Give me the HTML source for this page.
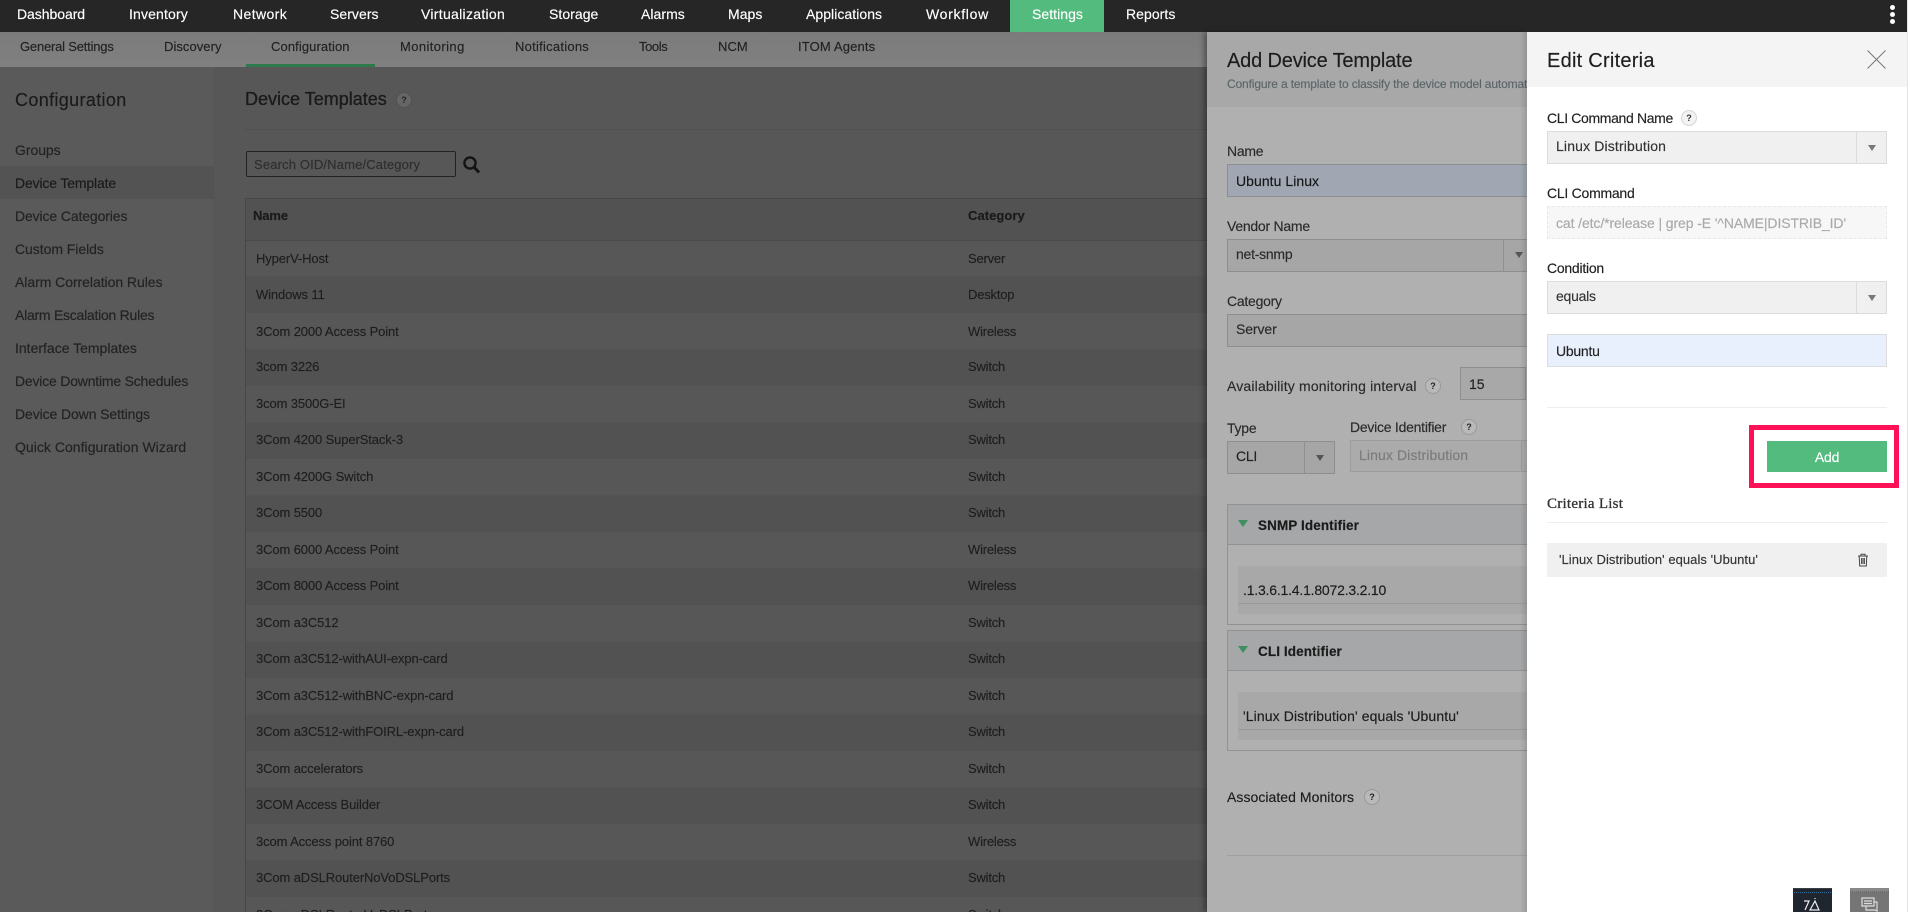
<!DOCTYPE html>
<html><head><meta charset="utf-8"><title>Add Device Template</title>
<style>
html,body{margin:0;padding:0;width:1910px;height:912px;overflow:hidden;background:#fff}
body{position:relative;font-family:"Liberation Sans",sans-serif;font-size:14px}
div,span,svg{position:absolute}
.t{white-space:nowrap;line-height:20px;height:20px;letter-spacing:-.25px;-webkit-text-stroke:.15px}
.n{color:#fff;top:4px;font-size:14px;letter-spacing:.05px}
.s{color:#222;top:37px;font-size:13px;letter-spacing:.05px}
.m{color:#222;left:15px;font-size:14px;letter-spacing:-.05px}
.r{color:#1e1e1e;left:256px;font-size:13px;letter-spacing:-.12px}
.c{color:#1e1e1e;left:968px;font-size:13px;letter-spacing:-.2px}
.l{color:#2a2a2a;left:1227px}
.p{color:#222;left:1547px}
.box{box-sizing:border-box}
.h{width:16px;height:16px;border-radius:50%;box-sizing:border-box;text-align:center;font:bold 9px/14px "Liberation Sans",sans-serif}
.ha{background:#b9b9b9;border:1px solid #999;color:#222}
.hw{background:#f3f3f3;border:1px solid #d4d4d4;color:#333}
.ar{width:0;height:0;border-left:4px solid transparent;border-right:4px solid transparent;border-top:6px solid}
</style></head><body>

<!-- Base dimmed page -->
<div style="left:0;top:67px;width:214px;height:845px;background:#5a5a5a;border-right:1px solid #555"></div>
<div style="left:215px;top:67px;width:992px;height:845px;background:#575757"></div>
<div class="box" style="left:0;top:166px;width:214px;height:33px;background:#535353"></div>

<!-- Top nav -->
<div style="left:0;top:0;width:1910px;height:32px;background:#262626"></div>
<div style="left:1010px;top:0;width:94px;height:32px;background:#53bb7e"></div>
<span class="t n" style="left:17px;letter-spacing:-.05px">Dashboard</span>
<span class="t n" style="left:129px;letter-spacing:.15px">Inventory</span>
<span class="t n" style="left:233px;letter-spacing:.4px">Network</span>
<span class="t n" style="left:330px">Servers</span>
<span class="t n" style="left:421px;letter-spacing:.3px">Virtualization</span>
<span class="t n" style="left:549px">Storage</span>
<span class="t n" style="left:641px">Alarms</span>
<span class="t n" style="left:728px">Maps</span>
<span class="t n" style="left:806px">Applications</span>
<span class="t n" style="left:926px;letter-spacing:.7px">Workflow</span>
<span class="t n" style="left:1032px">Settings</span>
<span class="t n" style="left:1126px">Reports</span>
<div style="left:1890px;top:5px;width:5px;height:5px;border-radius:50%;background:#fff"></div>
<div style="left:1890px;top:12px;width:5px;height:5px;border-radius:50%;background:#fff"></div>
<div style="left:1890px;top:19px;width:5px;height:5px;border-radius:50%;background:#fff"></div>

<!-- Sub nav -->
<div style="left:0;top:32px;width:1207px;height:35px;background:linear-gradient(#7b7b7b,#808080)"></div>
<div style="left:246px;top:64px;width:129px;height:3px;background:#2f7a4c"></div>
<span class="t s" style="left:20px;letter-spacing:-.2px">General Settings</span>
<span class="t s" style="left:164px;letter-spacing:.05px">Discovery</span>
<span class="t s" style="left:271px;letter-spacing:.1px">Configuration</span>
<span class="t s" style="left:400px;letter-spacing:.4px">Monitoring</span>
<span class="t s" style="left:515px;letter-spacing:.25px">Notifications</span>
<span class="t s" style="left:639px;letter-spacing:-.4px">Tools</span>
<span class="t s" style="left:718px">NCM</span>
<span class="t s" style="left:798px;letter-spacing:.15px">ITOM Agents</span>

<!-- Sidebar -->
<span class="t" style="left:15px;top:90px;font-size:18px;color:#1a1a1a;letter-spacing:.35px">Configuration</span>
<span class="t m" style="top:140px">Groups</span>
<span class="t m" style="top:173px;color:#1a1a1a;letter-spacing:-.15px">Device Template</span>
<span class="t m" style="top:206px;letter-spacing:-.12px">Device Categories</span>
<span class="t m" style="top:239px">Custom Fields</span>
<span class="t m" style="top:272px">Alarm Correlation Rules</span>
<span class="t m" style="top:305px;letter-spacing:-.25px">Alarm Escalation Rules</span>
<span class="t m" style="top:338px;letter-spacing:0">Interface Templates</span>
<span class="t m" style="top:371px;letter-spacing:-.2px">Device Downtime Schedules</span>
<span class="t m" style="top:404px;letter-spacing:-.1px">Device Down Settings</span>
<span class="t m" style="top:437px;letter-spacing:.03px">Quick Configuration Wizard</span>

<!-- Main -->
<span class="t" style="left:245px;top:89px;font-size:18px;color:#1a1a1a;letter-spacing:0;-webkit-text-stroke:.3px">Device Templates</span>
<div class="h" style="left:396px;top:92px;background:#666;border:1px solid #525252;color:#222">?</div>
<div style="left:245px;top:129px;width:962px;height:0;border-top:1px dotted #4c4c4c"></div>
<div class="box" style="left:246px;top:151px;width:210px;height:26px;border:1px solid #222;border-radius:2px;background:#575757"></div>
<span class="t" style="left:254px;top:155px;font-size:13px;color:#2e2e2e;letter-spacing:.15px">Search OID/Name/Category</span>
<svg style="left:462px;top:155px" width="19" height="19" viewBox="0 0 19 19"><circle cx="8" cy="8" r="5.6" fill="none" stroke="#141414" stroke-width="2.4"/><path d="M12 12l5 5.500" stroke="#141414" stroke-width="3" fill="none"/></svg>

<div style="left:245px;top:198px;width:962px;height:43px;background:#525252;border-top:1px solid #464646;border-bottom:1px solid #4a4a4a;box-sizing:border-box"></div>
<div style="left:245px;top:198px;width:1px;height:714px;background:#464646"></div>
<div style="left:246px;top:241px;width:961px;height:671px;background:repeating-linear-gradient(#575757 0,#575757 35.5px,#525252 35.5px,#525252 72px,#575757 72px,#575757 73px)"></div>
<span class="t r" style="left:253px;top:206px;font-weight:bold;color:#1a1a1a;font-size:13px">Name</span>
<span class="t c" style="top:206px;font-weight:bold;color:#1a1a1a;letter-spacing:.05px">Category</span>

<span class="t r" style="top:249px">HyperV-Host</span><span class="t c" style="top:249px">Server</span>
<span class="t r" style="top:285px">Windows 11</span><span class="t c" style="top:285px">Desktop</span>
<span class="t r" style="top:322px">3Com 2000 Access Point</span><span class="t c" style="top:322px">Wireless</span>
<span class="t r" style="top:357px">3com 3226</span><span class="t c" style="top:357px">Switch</span>
<span class="t r" style="top:394px">3com 3500G-EI</span><span class="t c" style="top:394px">Switch</span>
<span class="t r" style="top:430px">3Com 4200 SuperStack-3</span><span class="t c" style="top:430px">Switch</span>
<span class="t r" style="top:467px">3Com 4200G Switch</span><span class="t c" style="top:467px">Switch</span>
<span class="t r" style="top:503px">3Com 5500</span><span class="t c" style="top:503px">Switch</span>
<span class="t r" style="top:540px">3Com 6000 Access Point</span><span class="t c" style="top:540px">Wireless</span>
<span class="t r" style="top:576px">3Com 8000 Access Point</span><span class="t c" style="top:576px">Wireless</span>
<span class="t r" style="top:613px">3Com a3C512</span><span class="t c" style="top:613px">Switch</span>
<span class="t r" style="top:649px">3Com a3C512-withAUI-expn-card</span><span class="t c" style="top:649px">Switch</span>
<span class="t r" style="top:686px">3Com a3C512-withBNC-expn-card</span><span class="t c" style="top:686px">Switch</span>
<span class="t r" style="top:722px">3Com a3C512-withFOIRL-expn-card</span><span class="t c" style="top:722px">Switch</span>
<span class="t r" style="top:759px">3Com accelerators</span><span class="t c" style="top:759px">Switch</span>
<span class="t r" style="top:795px">3COM Access Builder</span><span class="t c" style="top:795px">Switch</span>
<span class="t r" style="top:832px">3com Access point 8760</span><span class="t c" style="top:832px">Wireless</span>
<span class="t r" style="top:868px">3Com aDSLRouterNoVoDSLPorts</span><span class="t c" style="top:868px">Switch</span>
<span class="t r" style="top:905px">3Com aDSLRouterVoDSLPorts</span><span class="t c" style="top:905px">Switch</span>

<!-- Add Device Template panel -->
<div style="left:1207px;top:32px;width:320px;height:880px;background:#b0b0b0;box-shadow:-3px 0 5px rgba(0,0,0,.35)"></div>
<div style="left:1207px;top:32px;width:320px;height:75px;background:#a8a8a8"></div>
<span class="t" style="left:1227px;top:51px;font-size:20px;color:#1c1c1c;letter-spacing:-.17px">Add Device Template</span>
<div style="left:1227px;top:74px;width:300px;height:20px;overflow:hidden"><span class="t" style="left:0;top:0;font-size:12px;color:#5b6569;letter-spacing:-.14px">Configure a template to classify the device model automatically</span></div>

<span class="t l" style="top:141px">Name</span>
<div class="box" style="left:1227px;top:164px;width:300px;height:33px;background:#a0a7b2;border:1px solid #8e8e8e;border-right:0"></div>
<span class="t" style="left:1236px;top:171px;color:#151515;letter-spacing:.05px">Ubuntu Linux</span>

<span class="t l" style="top:216px">Vendor Name</span>
<div class="box" style="left:1227px;top:239px;width:300px;height:33px;background:#a6a6a6;border:1px solid #8e8e8e;border-right:0"></div>
<div style="left:1503px;top:240px;width:1px;height:31px;background:#909090"></div>
<div class="ar" style="left:1515px;top:252px;border-top-color:#555"></div>
<span class="t" style="left:1236px;top:244px;color:#2a2a2a">net-snmp</span>

<span class="t l" style="top:291px">Category</span>
<div class="box" style="left:1227px;top:314px;width:300px;height:33px;background:#a6a6a6;border:1px solid #8e8e8e;border-right:0"></div>
<span class="t" style="left:1236px;top:319px;color:#2a2a2a;letter-spacing:-.1px">Server</span>

<span class="t l" style="top:376px;letter-spacing:.17px">Availability monitoring interval</span>
<div class="h ha" style="left:1425px;top:378px">?</div>
<div class="box" style="left:1460px;top:367px;width:66px;height:33px;background:#a8a8a8;border:1px solid #8e8e8e"></div>
<span class="t" style="left:1469px;top:374px;color:#222;letter-spacing:0">15</span>

<span class="t l" style="top:418px">Type</span>
<span class="t" style="left:1350px;top:417px;color:#2a2a2a">Device Identifier</span>
<div class="h ha" style="left:1461px;top:419px">?</div>
<div class="box" style="left:1227px;top:441px;width:108px;height:33px;background:#a6a6a6;border:1px solid #8e8e8e"></div>
<div style="left:1304px;top:442px;width:1px;height:31px;background:#909090"></div>
<div class="ar" style="left:1316px;top:455px;border-top-color:#555"></div>
<span class="t" style="left:1236px;top:446px;color:#222">CLI</span>
<div class="box" style="left:1350px;top:440px;width:177px;height:32px;background:#ababab;border:1px solid #9c9c9c;border-right:0"></div>
<div style="left:1521px;top:441px;width:1px;height:30px;background:#9c9c9c"></div>
<span class="t" style="left:1359px;top:445px;color:#7b7b7b;letter-spacing:.1px">Linux Distribution</span>

<div class="box" style="left:1227px;top:504px;width:300px;height:121px;border:1px solid #929292;border-right:0"></div>
<div class="box" style="left:1227px;top:504px;width:300px;height:41px;background:#a5a7a9;border:1px solid #929292;border-right:0"></div>
<div style="left:1238px;top:520px;width:0;height:0;border-left:5px solid transparent;border-right:5px solid transparent;border-top:7px solid #3f9060"></div>
<span class="t" style="left:1258px;top:516px;color:#1a1a1a;font-weight:bold;font-size:13.5px;letter-spacing:.1px">SNMP Identifier</span>
<div style="left:1238px;top:566px;width:289px;height:48px;background:#a8a8a8"></div>
<div style="left:1238px;top:603px;width:289px;height:1px;background:#999"></div>
<span class="t" style="left:1243px;top:580px;color:#1c1c1c;font-size:14px;letter-spacing:-.2px">.1.3.6.1.4.1.8072.3.2.10</span>

<div class="box" style="left:1227px;top:630px;width:300px;height:121px;border:1px solid #929292;border-right:0"></div>
<div class="box" style="left:1227px;top:630px;width:300px;height:41px;background:#a5a7a9;border:1px solid #929292;border-right:0"></div>
<div style="left:1238px;top:646px;width:0;height:0;border-left:5px solid transparent;border-right:5px solid transparent;border-top:7px solid #3f9060"></div>
<span class="t" style="left:1258px;top:642px;color:#1a1a1a;font-weight:bold;font-size:13.5px;letter-spacing:.1px">CLI Identifier</span>
<div style="left:1238px;top:692px;width:289px;height:48px;background:#a8a8a8"></div>
<div style="left:1238px;top:729px;width:289px;height:1px;background:#999"></div>
<span class="t" style="left:1243px;top:706px;color:#1c1c1c;letter-spacing:.1px">'Linux Distribution' equals 'Ubuntu'</span>

<span class="t l" style="top:787px;color:#1c1c1c;letter-spacing:.05px">Associated Monitors</span>
<div class="h ha" style="left:1364px;top:789px">?</div>
<div style="left:1227px;top:855px;width:300px;height:1px;background:#a0a0a0"></div>
<div style="left:1520px;top:32px;width:7px;height:880px;background:linear-gradient(90deg,rgba(0,0,0,0),rgba(0,0,0,.12))"></div>

<!-- Edit Criteria panel -->
<div style="left:1527px;top:32px;width:380px;height:880px;background:#fff"></div>
<div style="left:1527px;top:32px;width:380px;height:55px;background:#f4f4f4"></div>
<span class="t" style="left:1547px;top:51px;font-size:20px;color:#1e1e1e;letter-spacing:.25px">Edit Criteria</span>
<svg style="left:1866px;top:49px" width="21" height="21" viewBox="0 0 21 21"><path d="M1.500 1.500L19.500 19.500M19.500 1.500L1.500 19.500" stroke="#777" stroke-width="1" fill="none"/></svg>

<span class="t p" style="top:108px;letter-spacing:-.35px">CLI Command Name</span>
<div class="h hw" style="left:1681px;top:110px">?</div>
<div class="box" style="left:1547px;top:131px;width:340px;height:33px;background:#f0f0f0;border:1px solid #dcdcdc"></div>
<div style="left:1856px;top:132px;width:1px;height:31px;background:#dcdcdc"></div>
<div class="ar" style="left:1868px;top:145px;border-top-color:#777"></div>
<span class="t" style="left:1556px;top:136px;color:#333;letter-spacing:.15px">Linux Distribution</span>

<span class="t p" style="top:183px">CLI Command</span>
<div class="box" style="left:1547px;top:206px;width:340px;height:33px;background:#f7f7f7;border:1px dashed #e9e9e9"></div>
<span class="t" style="left:1556px;top:213px;color:#a9a9a9;font-size:14px;letter-spacing:-.1px">cat /etc/*release | grep -E '^NAME|DISTRIB_ID'</span>

<span class="t p" style="top:258px">Condition</span>
<div class="box" style="left:1547px;top:281px;width:340px;height:33px;background:#f0f0f0;border:1px solid #dcdcdc"></div>
<div style="left:1856px;top:282px;width:1px;height:31px;background:#dcdcdc"></div>
<div class="ar" style="left:1868px;top:295px;border-top-color:#777"></div>
<span class="t" style="left:1556px;top:286px;color:#333">equals</span>

<div class="box" style="left:1547px;top:334px;width:340px;height:33px;background:#e8f0fe;border:1px solid #dcdcdc"></div>
<span class="t" style="left:1556px;top:341px;color:#222">Ubuntu</span>

<div style="left:1547px;top:407px;width:340px;height:1px;background:#eee"></div>
<div class="box" style="left:1749px;top:425px;width:150px;height:63px;border:5px solid #ff1158"></div>
<div style="left:1767px;top:441px;width:120px;height:31px;background:#53bb7e"></div>
<span class="t" style="left:1767px;top:447px;width:120px;text-align:center;color:#fff;letter-spacing:-.2px">Add</span>

<span class="t" style="left:1547px;top:494px;font-family:'Liberation Serif',serif;font-size:15px;color:#333;letter-spacing:.25px;-webkit-text-stroke:.3px">Criteria List</span>
<div style="left:1547px;top:522px;width:340px;height:1px;background:#eee"></div>
<div style="left:1547px;top:543px;width:340px;height:34px;background:#f0f0f0"></div>
<span class="t" style="left:1559px;top:550px;color:#333;font-size:13px;letter-spacing:.05px">'Linux Distribution' equals 'Ubuntu'</span>
<svg style="left:1857px;top:553px" width="12" height="14" viewBox="0 0 12 14"><path d="M1 3h10M4 3V1.200h4V3M2.200 3l.5 10h6.600l.5-10M4.600 5v6M6 5v6M7.400 5v6" fill="none" stroke="#444" stroke-width="1"/></svg>

<div style="left:1793px;top:888px;width:39px;height:24px;background:#1f2630;border-top:1px solid #3a3f46;box-sizing:border-box"></div>
<div style="left:1794px;top:892px;width:37px;height:0;border-top:1px dotted #2f6f9f"></div>
<svg style="left:1803px;top:897px" width="20" height="15" viewBox="0 0 20 15"><path d="M1 4h5L2 13M12 4l-5 9h9zM12 1v1" fill="none" stroke="#eee" stroke-width="1.200"/></svg>
<div style="left:1850px;top:888px;width:39px;height:24px;background:#757575"></div>
<div style="left:1850px;top:888px;width:39px;height:4px;background:#888;border-bottom:1px dotted #666;box-sizing:border-box"></div>
<svg style="left:1861px;top:897px" width="18" height="15" viewBox="0 0 18 15"><path d="M1 1h12v8H1zM3 4h8M3 6.500h8M5 9v4h9l2 1V5h-3" fill="none" stroke="#ddd" stroke-width="1.200"/></svg>

<div style="left:1907px;top:0;width:3px;height:912px;background:#fff;border-left:1px solid #e4e4e4;box-sizing:border-box"></div>
</body></html>
